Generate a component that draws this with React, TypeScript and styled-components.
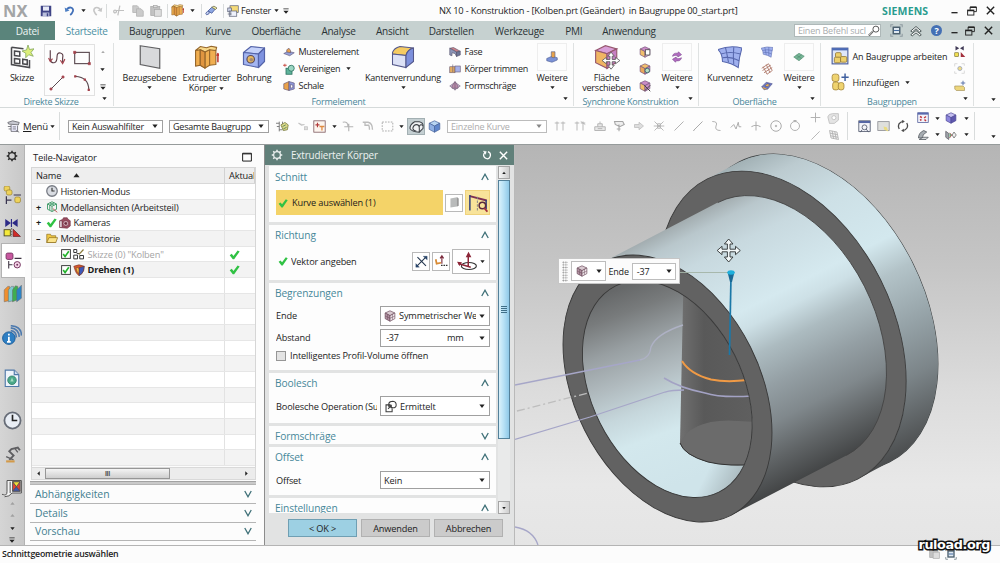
import React from "react";
import styled, { createGlobalStyle } from "styled-components";

const Global = createGlobalStyle`
  * { box-sizing: border-box; }
  body { margin: 0; background: #fff; overflow: hidden; }
`;

const Window = styled.div`
  width: 1000px;
  height: 563px;
  display: flex;
  flex-direction: column;
  background: #fcfcfc;
  color: #1c1c1c;
  font-family: "Open Sans", "Noto Sans", sans-serif;
  font-size: 9px;
  letter-spacing: -0.2px;
  white-space: nowrap;
  overflow: hidden;
`;

/* ---------- icons ---------- */

const cubeShape = (top: string, left: string, right: string, line: string) => (
  <g stroke={line} strokeWidth=".8" strokeLinejoin="round">
    <path d="M1 5 L6 1 L15 2 L11 6 Z" fill={top} />
    <path d="M1 5 L11 6 L11 15 L1 13 Z" fill={left} />
    <path d="M11 6 L15 2 L15 11 L11 15 Z" fill={right} />
  </g>
);
const hexCube = (a: string, b: string, c: string, line: string) => (
  <g stroke={line} strokeWidth=".9" strokeLinejoin="round">
    <path d="M8 1 L14.5 4 L8 7.5 L1.5 4 Z" fill={a} />
    <path d="M1.5 4 L8 7.5 V15 L1.5 11.5 Z" fill={b} />
    <path d="M14.5 4 L8 7.5 V15 L14.5 11.5 Z" fill={c} />
  </g>
);

const glyphs: Record<string, React.ReactNode> = {
  save: (
    <g>
      <path d="M1 1 H15 V15 H1 Z" fill="#3f4486" />
      <rect x="4" y="2" width="8" height="5.5" fill="#e6e9f6" />
      <rect x="3.5" y="10" width="9" height="5" fill="#b9bfdc" />
      <rect x="9" y="11" width="2" height="4" fill="#3f4486" />
    </g>
  ),
  undo: (
    <g>
      <path d="M4 6.500 Q7 2.500 11 4 Q15 6.500 12 11 Q11 13 9 14.500" fill="none" stroke="#4270b8" strokeWidth="2.600" />
      <path d="M1 3.500 L2 10 L8 8Z" fill="#4d7fc4" />
    </g>
  ),
  redo: (
    <g>
      <path d="M12 6.500 Q9 2.500 5 4 Q1 6.500 4 11 Q5 13 7 14.500" fill="none" stroke="#c6c6c6" strokeWidth="2.400" />
      <path d="M15 3.500 L14 10 L8 8Z" fill="#c6c6c6" />
    </g>
  ),
  cut: (
    <g stroke="#c0c0c0" fill="none" strokeWidth="1.8">
      <path d="M4 8 H16 M10 1 L7 15" />
      <circle cx="3" cy="9.500" r="2" />
    </g>
  ),
  copy: (
    <g fill="#cbcbcb" stroke="#b0b0b0">
      <path d="M1 1 H7 L9 3 V10 H1 Z" />
      <path d="M6 5 H12 L15 8 V15 H6 Z" />
    </g>
  ),
  paste: (
    <g fill="#c2c2c2" stroke="#aaa">
      <rect x="1" y="2" width="12" height="12" />
      <rect x="4.500" y=".5" width="5" height="3" fill="#ddd" />
      <rect x="6" y="6" width="9" height="9" fill="#ddd" />
    </g>
  ),
  extrude: (
    <g stroke="#94652b" strokeWidth=".7" strokeLinejoin="round">
      <path d="M1 3.500 L4 2.500 L7 4.500 L10 2.500 L14 3.500 V12.500 L10 13 L7 14.800 L4 13 L1 13.500 Z" fill="#f0ae50" />
      <path d="M1 3.500 L4 1 L8 1.800 L11 .8 L14.500 1.500 L14 3.500 L10 3 L7 4.500 L4 3 Z" fill="#f9d98a" />
      <path d="M4 3 V13 M7 4.500 V14.800 M10 3 V13" fill="none" />
      <path d="M4 3 L7 4.500 V14.800 L4 13Z" fill="#e09540" />
      <path d="M15.300 6 V11 M14.600 7 L15.300 5.500 L16 7" stroke="#c23b32" strokeWidth="1" />
    </g>
  ),
  eraser: (
    <g strokeWidth="1.100">
      <path d="M4 8 L9 3 L14 5 L9 11 Z" fill="#8da7e2" stroke="#485b9c" />
      <path d="M9 3 L12 1.500 L16 4 L14 6 Z" fill="#f0eda0" stroke="#77745b" />
      <path d="M1 11 Q3 7 6 9 Q6 13 2 13 Z" fill="#c7d1ee" stroke="#485b9c" />
    </g>
  ),
  windows: (
    <g stroke="#555a70" strokeWidth=".9">
      <rect x="4" y="1" width="11" height="9" fill="#f5da78" />
      <rect x="1" y="4" width="5" height="5" fill="#cfd5ea" />
      <rect x="3" y="8" width="10" height="7" fill="#eef1fb" />
      <path d="M1 12 H6 M5 8 V14" />
    </g>
  ),
  sketch: (
    <g fill="none" stroke="#4a4a4e" strokeWidth="1">
      <path d="M1 1.500 V13 L13 15 V10 M1 1.500 L9 2.500" />
      <path d="M3 4 L6.500 4.500 V7.500 L3 7 Z M3 9 L6.500 9.500 V12.500 L3 12 Z M8.500 9.500 L11.500 10 V13 L8.500 12.500 Z" />
      <path d="M12 0 L13 3 L16 2.500 L14 5 L15.500 7.500 L12.500 6.500 L10.500 8.500 L10.500 5.500 L8 4 L11 3.300Z" fill="#dcee7a" stroke="#7ea35a" strokeWidth=".5" />
    </g>
  ),
  spline: (
    <g fill="none" stroke="#5a3c46" strokeWidth="1">
      <path d="M2 1 V10 Q3 13 6 12 Q8 11 8 7 Q8 3 11 3.500 Q14 4 13 8 V12" />
      <path d="M.5 8 L2 11 L4 8.500 M15 9 L13 13 L11 10" stroke="#a3404a" />
    </g>
  ),
  rect: (
    <g fill="none" stroke="#5a4a50" strokeWidth="1">
      <rect x="1.500" y="3" width="13" height="10" />
      <path d="M.5 2 H2.500 V4 H.5Z M13.500 12 H15.500 V14 H13.500Z" fill="#a3404a" stroke="#a3404a" strokeWidth=".5" />
    </g>
  ),
  line: (
    <g fill="#a3404a" stroke="#5a4a50" strokeWidth="1">
      <path d="M2 14 L14 2" />
      <circle cx="2" cy="14" r="1.100" stroke="#a3404a" />
      <circle cx="14" cy="2" r="1.100" stroke="#a3404a" />
    </g>
  ),
  arc: (
    <g fill="none" stroke="#5a4a50" strokeWidth="1">
      <path d="M2 2 Q14 3 14 14" />
      <path d="M1.500 1.500 h1v1h-1z M10 4.500 h1v1h-1z M13.500 13.500h1v1h-1z" stroke="#a3404a" />
    </g>
  ),
  plane: <path d="M1.500 .5 L14.500 2.500 V15.500 L1.500 13 Z" fill="#d8d9db" stroke="#606062" strokeWidth=".8" />,
  hole: (
    <g>
      {cubeShape("#c5d2fa", "#a3b5f1", "#7f93e0", "#5463a8")}
      <circle cx="5.800" cy="9.500" r="2.500" fill="#e7b85d" stroke="#5a4c60" strokeWidth=".8" />
      <circle cx="6.200" cy="9.800" r="1.200" fill="#a58a70" />
    </g>
  ),
  round: (
    <g stroke="#54588a" strokeWidth=".7">
      <path d="M1 5 Q2 2 6 1 L15 2 Q11 3 10 7 L1 6 Z" fill="#f5cb62" />
      <path d="M1 6 L10 7 L10 15 L1 13 Z" fill="#dce1f6" />
      <path d="M10 7 Q11 3 15 2 V11 L10 15 Z" fill="#7d90dc" />
    </g>
  ),
  pattern: (
    <g stroke="#5d5376" strokeWidth=".8">
      <path d="M1 10 L7 7 L15 9 L9 13 Z" fill="#93a0d8" />
      <path d="M5 5 L8 3 L10 6 V9 L5 8Z" fill="#e9a24b" />
    </g>
  ),
  unite: (
    <g stroke="#2c7360" strokeWidth="1.100">
      <rect x="4" y="7" width="8" height="8" fill="#5eb39b" />
      <circle cx="11" cy="7" r="4" fill="#9bd5c2" />
      <path d="M0 3 H5 M2.500 1 V5" stroke="#c23b32" />
    </g>
  ),
  shell: (
    <g stroke="#5d5376" strokeWidth=".8">
      <path d="M1 5 L8 2 V14 L1 12Z" fill="#e9a24b" />
      <path d="M8 2 L15 4 V12 L8 14Z" fill="#8c95d6" />
      <path d="M10 6 L13 7 V10 L10 11Z" fill="#fff" />
    </g>
  ),
  chamfer: (
    <g stroke="#54506a" strokeWidth=".8">
      <path d="M1 3 L6 2 L15 7 L10 8Z" fill="#c98088" />
      <path d="M1 3 L10 8 V14 L8 10 L4 9 V13 L1 12Z" fill="#8c95b8" />
      <path d="M10 8 L15 7 V12 L10 14Z" fill="#6d7696" />
    </g>
  ),
  trim: (
    <g stroke="#6a5a70" strokeWidth=".8">
      <rect x="1" y="5" width="7" height="8" fill="#e4ae62" />
      <rect x="8" y="4" width="7" height="8" fill="#a5b0e8" />
      <path d="M5 2 V12" />
    </g>
  ),
  draft: (
    <g stroke="#6e5a76" strokeWidth=".8">
      <path d="M1 8 L8 3 L15 8 L8 13Z" fill="#d4c3dc" />
      <path d="M4 8 L8 2 L12 8 V11 H4Z" fill="#b88ba8" />
      <path d="M8 2 V14" />
    </g>
  ),
  boss: (
    <g stroke="#4b5c92" strokeWidth=".8">
      <path d="M1 10 L8 7 L15 9 V12 L8 15 L1 13Z" fill="#7b92d6" />
      <path d="M7 1 H12 V8 Q9.500 10 7 8Z" fill="#e8a34a" />
    </g>
  ),
  moveFace: (
    <g>
      <g stroke="#96586f" strokeWidth=".7">
        <path d="M1 4 L7 1 L14 3 L8 6 Z" fill="#d99fd8" />
        <path d="M1 4 L8 6 V15 L1 11.500Z" fill="#f0b563" />
        <path d="M8 6 L14 3 V11 L8 15Z" fill="#c77fc4" />
      </g>
      <path d="M10.500 5 L12.500 7.500 H11.200 V9.500 H13.200 V8.200 L15.900 10.200 L13.200 12.200 V10.900 H11.200 V13 H12.500 L10.500 15.500 L8.500 13 H9.800 V10.900 H7.600 V12.200 L5 10.200 L7.600 8.200 V9.500 H9.800 V7.500 H8.500Z" fill="#fff" stroke="#555" strokeWidth=".5" />
    </g>
  ),
  sync1: <g>{hexCube("#c98bc6", "#f1bf6c", "#e9c7e4", "#75527a")}<rect x="8.500" y="5" width="6" height="7" fill="#fff" stroke="#444" /></g>,
  sync2: <g>{hexCube("#f1bf6c", "#eaa75a", "#b985c0", "#75527a")}<circle cx="11" cy="10" r="3" fill="#b9dcc3" stroke="#3e6e6a" strokeWidth="1.200" /></g>,
  sync3: <g>{hexCube("#c98bc6", "#f1bf6c", "#c98bc6", "#75527a")}<path d="M7 7 L15 15 M15 7 L8 14" stroke="#444" strokeWidth="1.300" /></g>,
  swirl: (
    <g fill="#b26cc0" stroke="#7c4490" strokeWidth=".8">
      <path d="M2 7 Q3 2 9 3 L10 1 L14 5 L9 8 L9 6 Q5 5 2 7Z" />
      <path d="M14 9 Q13 14 7 13 L6 15 L2 11 L7 8 L7 10 Q11 11 14 9Z" />
    </g>
  ),
  mesh: (
    <g fill="#9fb0ee" stroke="#5767ad" strokeWidth=".7">
      <path d="M0 3 Q8 0 16 2 Q14 8 13.500 15 Q9 12 3 11 Q3 6 0 3Z" />
      <path d="M5 1.800 Q6 6 7 11.600 M10.500 1.500 Q10 7 10.500 13 M2 6 Q8 4 15 6 M3 8.500 Q8 7.500 14 10.500" fill="none" />
    </g>
  ),
  mesh2: (
    <g fill="none" stroke="#b07a6c" strokeWidth="1.200">
      <path d="M1 7 L10 1 M2 10 L13 3 M4 13 L15 6 M8 15 L15 10 M3 5 L8 15 M7 2 L12 13 M10 1 L15 10" />
    </g>
  ),
  mesh3: (
    <g stroke="#4a4e88" strokeWidth=".8">
      <path d="M1 9 L7 3 L15 5 L9 12Z" fill="#6e7cc8" />
      <path d="M5 8 L8 5 L12 6 L9 9Z" fill="#eab255" />
      <path d="M1 9 L4 13 L9 12" fill="#dda04a" />
    </g>
  ),
  sheet: (
    <g stroke="#4e8a6d" strokeWidth=".8" fill="#76b596">
      <path d="M1 8 L8 3 L15 7 L8 13Z" />
      <path d="M4.500 5.500 L11.500 10 M11.500 5 L4.500 10.500" fill="none" />
    </g>
  ),
  assembly: (
    <g>
      <rect x="1" y="1" width="14" height="14" fill="#dfe7f8" stroke="#4c5d9a" />
      <rect x="1" y="1" width="14" height="2" fill="#4c6ab6" />
      <g fill="#edd06b" stroke="#8f7430" strokeWidth=".7">
        <rect x="4" y="5" width="5" height="4.500" rx="1" />
        <rect x="3" y="9" width="5.500" height="5" rx="1" />
        <rect x="8.500" y="8.500" width="5.500" height="5" rx="1" />
      </g>
    </g>
  ),
  addPart: (
    <g>
      <g fill="#efd36f" stroke="#a18236" strokeWidth=".7">
        <rect x="1" y="1" width="6" height="6.500" rx="2" />
        <rect x="1.500" y="8" width="5.500" height="7" rx="2" />
        <rect x="6.500" y="8.500" width="5" height="6.500" rx="2" />
      </g>
      <path d="M12.500 .5 V7 M9.300 3.700 H15.700" stroke="#3f5f9f" strokeWidth="1.300" />
    </g>
  ),
  mirror: (
    <g>
      <path d="M2 0 V6 L7 3Z M13 0 V6 L8 3Z" fill="#403a56" />
      <rect x="1" y="9" width="5" height="5" fill="#f2e053" stroke="#6b6424" strokeWidth=".8" />
      <path d="M9 8 V14.500 H15Z" fill="#a3303c" />
    </g>
  ),
  brackets: (
    <g>
      <path d="M5 1 H1 V5 M11 15 H15 V11 M11 1 H15 V4 M1 12 V15 H4" fill="none" stroke="#ccc" />
      <circle cx="8.500" cy="8" r="3" fill="#efdb87" stroke="#8f9ab8" />
    </g>
  ),
  cluster: (
    <g>
      <path d="M1 8 H12 L14 10 V14 H3 L1 12Z" fill="#edd67c" stroke="#9c8950" strokeWidth=".8" />
      <path d="M12 1 V7 M9 4 H15" stroke="#506ba5" strokeWidth="1.200" />
    </g>
  ),
  menu: (
    <g stroke="#65656c" strokeWidth="1" fill="#c9cad2">
      <path d="M1 3 L7 1 L15 3 L14 6 L2 5Z" />
      <path d="M5 6 V14 H13 V7" fill="#eef" />
      <path d="M7 8.500 H11 M7 11 H11 M1 8 H5 M2 11 H5 M11 13 L15 15" />
    </g>
  ),
  asmPick: (
    <g strokeWidth="1">
      <path d="M4 2 V14 M4 4 H0 M4 8 H1 M4 12 H8 M8 2 V6" stroke="#666" fill="none" />
      <path d="M6 6 L11 3 L15 6 L14 12 L9 13Z" fill="#dcd888" stroke="#7c8045" />
      <path d="M8 8 L12 6 M9 11 L13 9" stroke="#4d7f58" />
    </g>
  ),
  faded: (
    <g stroke="#c2c2c2" fill="#ddd">
      <path d="M2 4 L6 7 L10 6" strokeWidth="1.500" />
      <rect x="10" y="9" width="4" height="4" />
    </g>
  ),
  snapBox: (
    <g fill="none">
      <rect x="1" y="1" width="14" height="14" stroke="#7f5b60" fill="#fdf5ef" />
      <path d="M3 6 H8 M5.500 3.500 V9" stroke="#b23b3b" strokeWidth="1.400" />
      <path d="M8 8 H14 M11 8 V13" stroke="#df8b42" strokeWidth="1.600" />
    </g>
  ),
  gPlus: <path d="M1 3 Q8 1 8 9 M3 9 H15 M9 5 V15" stroke="#b4b4b4" strokeWidth="1.500" fill="none" />,
  gHook: <path d="M1 3 H8 Q14 4 14 13 M4 3 V7 H9 Q10 9 10 13" stroke="#bcbcbc" strokeWidth="1.800" fill="none" />,
  dashed: <rect x="1.500" y="2.500" width="13" height="11" fill="none" stroke="#999" strokeDasharray="2 1.500" />,
  wireCube: (
    <g fill="#f0f2f4" stroke="#3d4248" strokeWidth="1.100">
      <path d="M1 10 Q1 6 6 3 H11 Q15 4 15 7 V10 L11 14 Q3 14 1 10Z" />
      <path d="M4 10 Q5 6 8 6 Q11 6 11 10 V14 M11 8 Q12 5 15 7 M4 10 Q5 13 8 13" fill="none" />
    </g>
  ),
  blueCube: hexCube("#b8d5f2", "#8fb0e4", "#5f86cc", "#49659c"),
  g1: <path d="M4 2 V14 M12 2 V14 M1 4 H7 M9 4 H15" stroke="#b7b7b7" strokeWidth="1.300" />,
  g2: <path d="M4 2 V14 M12 2 V14 M1 4 H7 M9 4 H15 M9 2 L15 6" stroke="#b7b7b7" strokeWidth="1.300" fill="none" />,
  g3: <path d="M1 9 H15 V14 H1Z M5 9 V5 H11 V9 M8 5 V2 M5 11.500 H11" stroke="#b0b0b0" strokeWidth="1.200" fill="#e8e8e8" />,
  g4: <path d="M8 15 V6 M2 2 H13 L15 6 L9 9 L3 6Z M5 12 H10" stroke="#a5a5a5" strokeWidth="1.400" fill="#eee" />,
  g5: <path d="M2 6 H8 V3 L14 8 L8 13 V10 H2Z" fill="#ddd" stroke="#bbb" />,
  g6: <path d="M2 2 L14 14 M14 2 L2 14 M1 8 H15 M6 5 H10 V11 H6Z" stroke="#b4b4b4" strokeWidth="1.200" fill="#eee" />,
  g7: <path d="M2 14 L14 2" stroke="#b0b0b0" strokeWidth="1.300" />,
  g8: <path d="M2 14 L14 2 M2 14 h1" stroke="#a8a8a8" strokeWidth="1.300" />,
  g9: <path d="M3 2 Q11 2 8 8 Q6 14 14 14" stroke="#b0b0b0" strokeWidth="1.300" fill="none" />,
  g10: <path d="M1 10 L5 6 L8 12 L11 3 L12 9 H15" stroke="#acacac" strokeWidth="1.300" fill="none" />,
  g11: <path d="M8 2 V14 M2 9 Q8 5 14 9" stroke="#b0b0b0" strokeWidth="1.400" fill="none" />,
  g12: <g stroke="#a9a9a9" fill="none" strokeWidth="1.300"><circle cx="8" cy="8" r="7" /><circle cx="8" cy="8" r="1" /></g>,
  g13: <g stroke="#b0b0b0" fill="none" strokeWidth="1.300"><circle cx="8" cy="8" r="6" /><path d="M6 1 H10" strokeWidth="2.500" /></g>,
  g14: <path d="M8 1 V15 M1 8 H15" stroke="#b0b0b0" strokeWidth="1.400" />,
  g15: <g stroke="#bdbdbd" fill="#e4e4e4"><path d="M1 6 Q2 2 7 2 H14 V10 L9 14 H3Z" /><circle cx="8.500" cy="7" r="2.500" fill="#fff" /></g>,
  g16: <path d="M2 2 L12 4 L14 14 L4 12Z M5.500 2.500 L7.500 13 M9 3.500 L11 13.500 M2.500 5.500 L12.500 7.500 M3.300 9 L13.300 11" stroke="#a9a9a9" fill="#f1f1f1" />,
  fitWin: (
    <g fill="none" stroke="#4c5468">
      <rect x="1" y="1" width="14" height="13" fill="#f4f5fa" />
      <path d="M1 2.500 H15" stroke="#5667a5" strokeWidth="2.500" />
      <circle cx="8" cy="9" r="3" />
      <path d="M10 11 L13 15 M3 15 L5 12" />
    </g>
  ),
  picture: (
    <g>
      <rect x="1" y="2" width="14" height="11" fill="#dfe0dd" stroke="#8c8e93" />
      <path d="M8 8 L12 9 L14 14 L9 12Z" fill="#eadc83" />
    </g>
  ),
  refresh: (
    <g fill="none" stroke="#4a4a4a" strokeWidth="1.700">
      <path d="M3 12 Q0 6 5 3 L8 2 M13 4 Q16 10 11 13 L8 14" />
      <path d="M7 0 L10 2 L7 4Z M9 12 L6 14 L9 16Z" fill="#4a4a4a" strokeWidth=".5" />
    </g>
  ),
  layout: (
    <g>
      <rect x="1" y="1" width="14" height="13" fill="#f3f3fa" stroke="#4d5998" />
      <rect x="1" y="1" width="14" height="2.500" fill="#5a69ae" />
      <path d="M4 6 L6.500 7.500 M4 11 L6 10 M12 6 L9.500 8 M12 12 L10 10" stroke="#c0393f" strokeWidth="2" />
    </g>
  ),
  purpleCube: hexCube("#c5bff0", "#8d86dd", "#5f58ae", "#4c4794"),
  hide: (
    <g stroke="#4c5258" strokeWidth="1" fill="#a7adb2">
      <path d="M2 12 Q2 5 9 2 L13 4 Q7 7 7 12Z" />
      <path d="M3 14 H12 L15 11 H8Z" fill="#d4d8da" />
    </g>
  ),
  section: (
    <g>
      <path d="M1 3 L5 6 V14 L1 11Z" fill="#a0a4aa" stroke="#5d5d66" />
      <path d="M6 5 L9 8 L6 12" fill="#58b47a" stroke="#b5404a" />
      <path d="M12 4 L15 8 L12 12 L9.500 8Z" fill="#eee" stroke="#666" />
    </g>
  ),
  gear: (
    <g stroke="currentColor" fill="none">
      <circle cx="8" cy="8" r="4.500" strokeWidth="1.700" />
      <path d="M8 1 V3 M8 13 V15 M1 8 H3 M13 8 H15 M3 3 L4.500 4.500 M11.500 11.500 L13 13 M13 3 L11.500 4.500 M4.500 11.500 L3 13" strokeWidth="2" />
    </g>
  ),
  asmTree: (
    <g>
      <g fill="#eed25a" stroke="#9b812b" strokeWidth=".6">
        <rect x="1" y="0" width="5" height="4.500" rx="1.500" />
        <rect x="3" y="3.500" width="5" height="4.500" rx="1.500" />
        <rect x="10.500" y="9.800" width="5" height="5" rx="1.500" />
      </g>
      <path d="M3 9 V16 M3 12.500 H7.500 M9.500 8 H16" stroke="#3a3550" strokeWidth="1.100" />
    </g>
  ),
  constraint: (
    <g>
      <path d="M2 0 V7 L7 3.500Z M13 0 V7 L8 3.500Z" fill="#2c2a86" />
      <path d="M7.500 0 V7" stroke="#2c2a86" />
      <rect x="1" y="9.500" width="5.500" height="5.500" fill="#f5ea3b" stroke="#4d4a22" strokeWidth=".8" />
      <path d="M9 9 V15.500 H15.500Z" fill="#d12c28" stroke="#5f1f28" strokeWidth=".6" />
      <path d="M7.700 8 V16" stroke="#444" strokeDasharray="1.500 1" strokeWidth=".7" />
    </g>
  ),
  partTree: (
    <g>
      <rect x="1" y="1" width="6.500" height="6" rx="1.500" fill="#c7589f" stroke="#70305c" strokeWidth=".8" />
      <path d="M3.500 8.500 V15.500 M3.500 12 H7 M9 6 H15.500" stroke="#3c3340" strokeWidth="1" />
      <circle cx="11.500" cy="12" r="3" fill="#f5d6e8" stroke="#70305c" strokeWidth=".9" />
      <circle cx="11.500" cy="12" r=".9" fill="#70305c" />
    </g>
  ),
  books: (
    <g strokeWidth=".4" stroke="#666">
      <path d="M1 5 L4 2 L5.500 2 L5 14 L1 15Z" fill="#ef8f2e" />
      <path d="M4.500 5 L7 2 L9 2 V14 L4.500 15Z" fill="#7cc9cf" />
      <path d="M8 5 L10.500 1.500 L12.500 2 V13 L8 15Z" fill="#3fae4f" />
      <path d="M11.500 5 L15.500 1 V12 L11.500 15Z" fill="#2b83c6" />
    </g>
  ),
  info: (
    <g fill="none" stroke="#4d7aae" strokeWidth="1.300">
      <path d="M7 4.500 Q11.500 5 11.500 10 M7 2.300 Q13.500 3 13.800 9.500 M7 .6 Q15.500 1 15.600 8.500" />
      <circle cx="5.500" cy="10.500" r="5" fill="#2e7fc3" stroke="#1d5f9c" strokeWidth=".8" />
      <path d="M5.500 7 V8.300 M5.500 9.300 V13.500 M4 13.500 H7" stroke="#fff" strokeWidth="1.400" />
    </g>
  ),
  doc: (
    <g>
      <path d="M2 1 H10 L14 5 V15.500 H2Z" fill="#eef4fb" stroke="#5079a8" />
      <path d="M10 1 V5 H14" fill="#cfdcec" stroke="#5079a8" />
      <circle cx="8" cy="10" r="3.800" fill="#4ba989" stroke="#2d7a66" strokeWidth=".7" />
      <path d="M8 7.500 L9.500 11 H6.500Z" fill="#a5dcc2" />
    </g>
  ),
  clock: (
    <g>
      <circle cx="8" cy="8" r="6.800" fill="#e9eef5" stroke="#666c77" strokeWidth="1.500" />
      <path d="M8 3.200 V8 H12" fill="none" stroke="#222" strokeWidth="1.400" />
    </g>
  ),
  smallClock: (
    <g>
      <circle cx="8" cy="8" r="7" fill="#d9dce2" stroke="#777b84" strokeWidth="1.700" />
      <path d="M8 3.500 V8 H11.500" fill="none" stroke="#333" strokeWidth="1.500" />
    </g>
  ),
  robot: (
    <g fill="none" stroke="#5f5f62" strokeWidth="1.800">
      <path d="M15 4 L13 1.500 L7 3 L5 5 L9 9 L5 13" />
      <path d="M10 2 L13 6 M2 10 L9 13" strokeWidth="1.200" />
      <path d="M2 14.500 H10" stroke="#d39a4a" strokeWidth="2" />
    </g>
  ),
  roll: (
    <g strokeWidth=".8" stroke="#555">
      <path d="M0 13 Q4 15 4 11 V2 H15.500 V12 H8 Q6 15 2 15" fill="#f4f4f4" />
      <rect x="8.500" y="3" width="6" height="7.500" fill="#e8402f" />
      <path d="M8.500 3 L11.500 7 L14.500 3Z" fill="#f2df36" />
      <path d="M8.500 10.500 L11.500 7 L14.500 10.500Z" fill="#3e55b8" />
      <path d="M6.500 3 V12" />
    </g>
  ),
  modelView: (
    <g fill="none" stroke="#3c9a67" strokeWidth="1.200">
      <path d="M8 1 L14 4 V11 L8 14 L2 11 V4Z M2 4 L8 7 L14 4 M8 7 V14 M5 2.500 L11 5.500 M11 2.500 L5 5.500 V12" />
      <path d="M9 10 L15 15" stroke="#c05050" />
    </g>
  ),
  camera: (
    <g stroke="#6a2b3c" strokeWidth=".8">
      <path d="M1 5 L5 3 L6 1 L11 1 L12 3 L15 5 V12 L11 15 L1 14Z" fill="#9b4d60" />
      <circle cx="9" cy="8.500" r="3.600" fill="#e9c6d0" />
      <circle cx="9" cy="8.500" r="1.600" fill="#6a2b3c" />
      <path d="M1 5 V14 L4 14 V5Z" fill="#efe6ea" />
    </g>
  ),
  folder: (
    <g stroke="#8a6b1c" strokeWidth=".9">
      <path d="M1 3 H6 L7 5 H13 V14 H1Z" fill="#f1c944" />
      <path d="M1 14 L4 7.500 H15.500 L13 14Z" fill="#fbe38a" />
    </g>
  ),
  checkbox: (
    <g fill="none">
      <rect x="1" y="1" width="14" height="14" fill="#fff" stroke="#333" strokeWidth="1.500" />
      <path d="M3.500 8 L6.500 12 L12.500 3.500" stroke="#24b32d" strokeWidth="2.600" />
    </g>
  ),
  sketchTree: (
    <g fill="none" stroke="#333" strokeWidth="1.300">
      <path d="M1 2 H5 V6 H1Z M1 9.500 H6 V14.500 H1Z M9 10 H14 V14.500 H9Z M5 7.500 H9" />
      <path d="M8 8.500 L14 2" stroke="#8a7a3a" strokeWidth="1.600" />
    </g>
  ),
  revolve: (
    <g strokeWidth=".7" stroke="#6b3422">
      <path d="M1 3 Q8 -1 15 3 L14 9 Q12 14 8 15.500 Q4 13 3 9Z" fill="#d5562f" />
      <path d="M8 5 L15 3 L14 9 Q12 14 8 15.500Z" fill="#3c58ba" />
      <path d="M4 5 Q6 4 8 6 V13 Q4 10 4 5Z" fill="#f3b845" />
    </g>
  ),
  check: <path d="M1 9 L4 7 L6.500 10 L12.500 2 L15.500 3.500 L7.500 15 H5.500 Z" fill="#30c244" />,
  bevel: (
    <g>
      <path d="M3 3 L11 1.500 L13 3 V12 L11 13 L3 14Z" fill="#b9bbbb" />
      <path d="M11 1.500 L13 3 V12 L11 13Z" fill="#999" />
    </g>
  ),
  curveRule: (
    <g fill="none" stroke="#5b2b3e" strokeWidth="1.200">
      <path d="M1.500 2.500 L15 6" stroke="#7c2f52" strokeWidth="1.500" />
      <path d="M1.500 1.500 V14 M14.500 5.500 V13" stroke="#31407e" />
      <path d="M7.500 3 V15" stroke="#888" strokeDasharray="2 1" strokeWidth=".8" />
      <circle cx="11.500" cy="10" r="2.600" />
      <path d="M13 12 L15.500 15" stroke="#a3303c" strokeWidth="1.500" />
    </g>
  ),
  reverse: (
    <g stroke="#23364e" strokeWidth="1.300" fill="#27466f">
      <path d="M3 2.500 L13.500 13.500 M2 14 L14 2" fill="none" />
      <path d="M10 1.500 H15 V6Z M1 15 V10.500 L5.500 15Z" strokeWidth=".3" />
    </g>
  ),
  vecDlg: (
    <g fill="none">
      <path d="M9 11 V3 M7 5 L9 2 L11 5" stroke="#7b2a3c" strokeWidth="1.300" />
      <path d="M2 6 L3 11 L8 10" stroke="#d88a34" strokeWidth="2" />
      <path d="M8 13 H16" stroke="#333" strokeWidth="1.500" strokeDasharray="1.800 1" />
    </g>
  ),
  vector: (
    <g fill="none" stroke="#333" strokeWidth=".9">
      <ellipse cx="9.500" cy="12" rx="6" ry="2.800" />
      <path d="M9 12 V4 M1 10 L11 13" stroke="#8c2638" strokeWidth="1.200" />
      <path d="M7 5 L9.200 .5 L11.500 5Z M0 8.500 L4 9 L2 12Z" fill="#8c2638" stroke="none" />
    </g>
  ),
  symCube: (
    <g>
      {hexCube("#d9c9d0", "#b393a3", "#efe6ea", "#6b4c5c")}
      <path d="M11.200 5.500 V13 M8 11 L14.500 8 M4.800 5.700 V13 M1.500 8 L8 11" stroke="#6b4c5c" strokeWidth=".7" />
    </g>
  ),
  boolean: (
    <g fill="none" stroke="#3d3d3d" strokeWidth="1.300">
      <path d="M8 6 H2.500 V14.500 H10 V10" />
      <path d="M6 9 V4 Q7 1.500 11 1.500 Q15 2 15 6 Q15 9.500 11 9.500 Q8 9.500 7 7.500" />
      <path d="M5 11 L9 7 M9 10 V6.500 H5.500" />
    </g>
  ),
  down: <path d="M1 4 H15 L8 13Z" fill="currentColor" />,
  barDown: <path d="M1 1 H15 V3.500 H1Z M1 7 H15 L8 15Z" fill="currentColor" />,
  up: <path d="M1 12 H15 L8 3Z" fill="currentColor" />,
  left: <path d="M12 1 V15 L4 8Z" fill="currentColor" />,
  right: <path d="M4 1 V15 L12 8Z" fill="currentColor" />,
  chevUp: <path d="M1.500 14 L8 2.500 L14.500 14" fill="none" stroke="#3f7078" strokeWidth="2.600" />,
  chevDown: <path d="M1.500 2 L8 13.500 L14.500 2" fill="none" stroke="#3f7078" strokeWidth="2.600" />,
  close: <path d="M1.500 1.500 L14.500 14.500 M14.500 1.500 L1.500 14.500" stroke="currentColor" strokeWidth="2.500" />,
  minimize: <path d="M1 13 H15" stroke="currentColor" strokeWidth="3" />,
  restore: (
    <g fill="none" stroke="currentColor" strokeWidth="1.500">
      <path d="M5 6 V1.500 H15 V9 H11" />
      <rect x="1" y="6.500" width="10" height="8" />
      <path d="M5 2.300 H15 M1 7.300 H11" strokeWidth="2" />
    </g>
  ),
  maximize: <path d="M1 2 H15 V14.500 H1Z M1 3 H15" fill="none" stroke="#222" strokeWidth="1.600" />,
  fullscreen: (
    <g fill="none" stroke="#4b5f6e" strokeWidth="1.300">
      <path d="M4 1 H1 V4 M12 1 H15 V4 M4 15 H1 V12 M12 15 H15 V12" stroke="#8e9aa0" />
      <rect x="4" y="4" width="8" height="8" fill="#dfe8f0" strokeWidth="1.800" />
      <path d="M5 8 H11" stroke="#4169a0" />
    </g>
  ),
  dblUp: (
    <g fill="#fff" stroke="#3c4a4a" strokeWidth="1.200" strokeLinejoin="round">
      <path d="M1 8 L8 2 L15 8 L13 9.500 L8 5 L3 9.500Z" />
      <path d="M1 13 L8 7.500 L15 13 L13 14.500 L8 10.500 L3 14.500Z" />
    </g>
  ),
  search: (
    <g fill="#fff" stroke="#555" strokeWidth="1.300">
      <circle cx="10.500" cy="5.500" r="4" />
      <path d="M7.500 8.500 L2 14.500 L1 13 L6.500 7.500" />
    </g>
  ),
  reset: (
    <g fill="none" stroke="#fff" strokeWidth="2">
      <path d="M9.500 2.500 Q14 4 13.500 8.500 Q12.500 14 8 14 Q3 13.500 2.500 8.500 Q2.500 6 5 4" />
      <path d="M2 1.500 L7 2.500 L5.500 7Z" fill="#fff" strokeWidth=".5" />
    </g>
  ),
};

const Glyph = styled.svg<{ $s: number; $c?: string }>`
  flex: none;
  display: block;
  width: ${(p) => p.$s}px;
  height: ${(p) => p.$s}px;
  color: ${(p) => p.$c ?? "#222"};
`;
const Icon = ({ n, s = 12, c }: { n: string; s?: number; c?: string }) => (
  <Glyph viewBox="0 0 16 16" $s={s} $c={c}>{glyphs[n]}</Glyph>
);

/* ---------- title bar ---------- */

const Cell = styled.div<{ $w: number; $left?: boolean; $size?: number; $ls?: number }>`
  flex: 0 0 ${(p) => p.$w}px;
  width: ${(p) => p.$w}px;
  display: flex;
  align-items: center;
  justify-content: ${(p) => (p.$left ? "flex-start" : "center")};
  font-size: ${(p) => p.$size ?? 9}px;
  letter-spacing: ${(p) => p.$ls ?? -0.2}px;
`;
const Spring = styled.div`
  flex: 1;
`;
const Rule = styled.i<{ $h: number }>`
  flex: 0 0 1px;
  height: ${(p) => p.$h}px;
  background: #d9dcdc;
`;
const TitleBar = styled.header`
  height: 21px;
  flex: none;
  display: flex;
  align-items: center;
`;
const Brand = styled.div`
  width: 32px;
  padding-left: 3px;
  font: bold 16.5px/20px "Noto Sans", sans-serif;
  color: #a3a5a6;
  letter-spacing: 0.2px;
`;
const Maker = styled.div`
  width: 60px;
  font: bold 10.5px/20px "Open Sans", sans-serif;
  color: #2a9c8f;
  letter-spacing: 0.15px;
`;

/* ---------- tabs ---------- */

const TabBar = styled.nav`
  height: 19px;
  flex: none;
  display: flex;
  align-items: stretch;
  background: #c6d1d0;
`;
const Tab = styled.div<{ $w: number; $kind?: "file" | "active" }>`
  flex: 0 0 ${(p) => p.$w}px;
  display: flex;
  align-items: center;
  justify-content: center;
  font-size: 10px;
  letter-spacing: -0.25px;
  color: ${(p) => (p.$kind === "file" ? "#eef5f3" : p.$kind === "active" ? "#4b8fa3" : "#2b3335")};
  background: ${(p) => (p.$kind === "file" ? "#5a847b" : p.$kind === "active" ? "#fdfdfd" : "transparent")};
`;
const SearchBox = styled.div`
  align-self: center;
  width: 87px;
  height: 13px;
  margin-right: 6px;
  padding-left: 3px;
  display: flex;
  align-items: center;
  justify-content: space-between;
  background: #fff;
  border: 1px solid #aeb8b8;
  color: #a9adae;
  font-size: 9px;
`;
const HelpMark = styled.div`
  width: 11px;
  height: 11px;
  border-radius: 50%;
  background: #4470b4;
  color: #fff;
  font: bold 9px/11px "Open Sans", sans-serif;
  text-align: center;
`;

/* ---------- ribbon ---------- */

const Ribbon = styled.section`
  height: 67px;
  flex: none;
  display: flex;
  background: #fdfdfd;
`;
const Group = styled.div<{ $w: number }>`
  flex: 0 0 ${(p) => p.$w}px;
  width: ${(p) => p.$w}px;
  min-width: 0;
  height: 63px;
  margin-top: 3px;
  display: flex;
  flex-direction: column;
  border-right: 1px solid #dfe2e2;
`;
const GroupBody = styled.div`
  height: 53px;
  display: flex;
`;
const GroupFoot = styled.div<{ $label: number; $corner: number }>`
  height: 10px;
  display: flex;
  align-items: center;
  color: #49879a;
  letter-spacing: -0.22px;
  & > span {
    flex: 0 0 ${(p) => p.$label * 2}px;
    text-align: center;
  }
  & > svg {
    margin-left: ${(p) => p.$corner - 2 * p.$label}px;
    margin-top: -5px;
  }
`;
const BigButton = styled.div<{ $w: number; $frame?: boolean }>`
  flex: 0 0 ${(p) => p.$w}px;
  width: ${(p) => p.$w}px;
  min-width: 0;
  display: flex;
  flex-direction: column;
  align-items: center;
  line-height: 10px;
  text-align: center;
  & > div {
    width: ${(p) => (p.$frame ? 30 : 26)}px;
    height: 28px;
    margin-bottom: 2px;
    display: flex;
    align-items: center;
    justify-content: center;
    border: 1px solid ${(p) => (p.$frame ? "#eeeeee" : "transparent")};
  }
  & > svg {
    margin-top: 2px;
  }
`;
const Inline = styled.span`
  display: inline-flex;
  align-items: center;
  gap: 3px;
`;
const Big = ({ w, icon, s = 24, label, second, menu, frame }: {
  w: number; icon: string; s?: number; label: string; second?: React.ReactNode; menu?: boolean; frame?: boolean;
}) => (
  <BigButton $w={w} $frame={frame}>
    <div><Icon n={icon} s={s} /></div>
    <span>{label}</span>
    {menu && <Icon n="down" s={5} />}
    {second && <Inline>{second}</Inline>}
  </BigButton>
);
const SmallList = styled.div<{ $w: number; $row?: number }>`
  flex: 0 0 ${(p) => p.$w}px;
  width: ${(p) => p.$w}px;
  min-width: 0;
  letter-spacing: ${(p) => (p.$row ? -0.13 : -0.3)}px;
  display: grid;
  grid-auto-rows: ${(p) => p.$row ?? 17.2}px;
  align-content: start;
  & > div {
    display: flex;
    align-items: center;
    gap: 3.5px;
  }
`;
const Gallery = styled.div`
  width: 51px;
  height: 52px;
  margin-top: 1px;
  display: grid;
  grid-template-columns: 1fr 1fr;
  place-items: center;
  border: 1px solid #e1e1e1;
`;
const GalleryNav = styled.div`
  width: 15px;
  display: flex;
  flex-direction: column;
  align-items: center;
  justify-content: space-between;
  padding: 7px 0 6px;
`;

/* ---------- selection bar ---------- */

const SelectionBar = styled.section`
  height: 38px;
  flex: none;
  display: flex;
  align-items: center;
  border-top: 1px solid #d5dada;
  border-bottom: 1px solid #969b9b;
  background: #fdfdfd;
`;
const Combo = styled.div<{ $w: number; $h?: number; $off?: boolean }>`
  flex: 0 0 ${(p) => p.$w}px;
  height: ${(p) => p.$h ?? 13}px;
  padding: 0 4px 0 3px;
  display: flex;
  align-items: center;
  gap: 3px;
  background: #fff;
  border: 1px solid ${(p) => (p.$off ? "#bcbcbc" : "#a0a0a0")};
  color: ${(p) => (p.$off ? "#adadad" : "#1c1c1c")};
  overflow: hidden;
  & > span {
    flex: 1;
    overflow: hidden;
  }
`;
const Pressed = styled.div`
  flex: 0 0 18px;
  height: 17px;
  display: flex;
  align-items: center;
  justify-content: center;
  background: #c4cfd2;
  border: 1px solid #a3b0b3;
`;
const Stack = styled.div<{ $w: number }>`
  flex: 0 0 ${(p) => p.$w}px;
  height: 29px;
  display: flex;
  flex-direction: column;
  align-items: center;
  justify-content: space-between;
`;
const StackCarets = styled(Stack)`
  padding: 4px 0;
`;
const EndCaret = styled.div`
  align-self: flex-end;
  padding: 0 4px 5px 0;
`;

/* ---------- work area ---------- */

const Work = styled.main`
  height: 401px;
  flex: none;
  display: flex;
  border-bottom: 1px solid #b4b4b4;
`;
const Rail = styled.aside`
  flex: 0 0 25px;
  display: flex;
  flex-direction: column;
  background: linear-gradient(90deg, #d5d5d5, #c8c8c8);
  border-right: 1px solid #b3b3b3;
`;
const RailItem = styled.div<{ $h: number; $active?: boolean }>`
  flex: 0 0 ${(p) => p.$h}px;
  display: flex;
  align-items: center;
  justify-content: center;
  ${(p) => p.$active && "background:#fff; margin: 0 -1px 0 1px; border: 1px solid #b3b3b3; border-right: 0;"}
`;
const Navigator = styled.section`
  flex: 0 0 240px;
  padding: 0 8px 0 5px;
  background: #fcfcfc;
  border-right: 1px solid #8c8c8c;
`;
const NavTitle = styled.div`
  height: 22px;
  padding: 2px 4px 0 3px;
  display: flex;
  align-items: center;
  justify-content: space-between;
  font-size: 9.5px;
`;
const Table = styled.div`
  margin-left: 1px;
  height: 300px;
  border: 1px solid #d6d6d6;
  border-bottom: 0;
  overflow: hidden;
  font-size: 9.25px;
  letter-spacing: -0.16px;
`;
const TreeHead = styled.div`
  display: grid;
  grid-template-columns: 193px 1fr;
  height: 16px;
  background: #eeeeee;
  border-bottom: 1px solid #d8d8d8;
  line-height: 16px;
  & > span {
    padding-left: 4px;
    display: flex;
    align-items: center;
    gap: 12px;
    border-right: 1px solid #d2d2d2;
    overflow: hidden;
  }
`;
const TreeRow = styled.div<{ $alt: boolean; $tone?: "bold" | "grey" }>`
  display: grid;
  grid-template-columns: 193px 1fr;
  height: 15.68px;
  border-bottom: 1px solid #e6e6e6;
  background: ${(p) => (p.$alt ? "#f3f3f3" : "#fff")};
  color: ${(p) => (p.$tone === "grey" ? "#a4a4a4" : "#1c1c1c")};
  font-weight: ${(p) => (p.$tone === "bold" ? 700 : 400)};
  & > span {
    display: flex;
    align-items: center;
    gap: 2.2px;
    border-right: 1px solid #e2e2e2;
  }
`;
const Twig = styled.b<{ $w: number }>`
  flex: 0 0 ${(p) => p.$w}px;
  font-weight: 700;
  font-size: 9px;
  text-align: left;
  padding-left: 4px;
`;
const HScroll = styled.div`
  height: 13px;
  margin-left: 1px;
  display: flex;
  align-items: center;
  padding: 0 6px 0 4px;
  background: #ececec;
  border: 1px solid #d9d9d9;
`;
const Thumb = styled.div`
  width: 125px;
  height: 11px;
  margin-left: 4px;
  display: flex;
  align-items: center;
  justify-content: center;
  background: linear-gradient(#f4f4f4, #cfcfcf);
  border: 1px solid #969696;
  font: bold 7px/9px "Liberation Sans", sans-serif;
  color: #555;
`;
const Splitter = styled.div`
  height: 4px;
  margin-top: 1px;
  background: #c9c9c9;
  border-top: 1px solid #a2a2a2;
  border-bottom: 1px solid #b5b5b5;
`;
const Fold = styled.div`
  height: 18.8px;
  padding: 0 4px 0 5px;
  display: flex;
  align-items: center;
  justify-content: space-between;
  color: #437f90;
  font-size: 10.4px;
  letter-spacing: -0.05px;
  border-bottom: 1px solid #b5b5b5;
`;

/* ---------- dialog ---------- */

const Dialog = styled.section`
  flex: 0 0 250px;
  width: 250px;
  min-width: 0;
  display: flex;
  flex-direction: column;
  background: #e2e3e3;
  border-right: 1px solid #b9b9b9;
  font-size: 9.2px;
  letter-spacing: -0.15px;
`;
const DialogHead = styled.div`
  height: 20px;
  flex: none;
  padding: 0 6px 0 6px;
  display: flex;
  align-items: center;
  gap: 7px;
  background: #61807a;
  color: #eef3f2;
  font-size: 9.9px;
  & > span {
    flex: 1;
    padding-left: 1px;
  }
`;
const DialogBody = styled.div`
  height: 349px;
  flex: none;
  padding: 1px 4px 0 4px;
  display: flex;
  gap: 2px;
`;
const Sections = styled.div`
  flex: 0 0 227px;
  display: flex;
  flex-direction: column;
  gap: 3px;
  overflow: hidden;
`;
const Section = styled.div<{ $h: number }>`
  flex: 0 0 ${(p) => p.$h}px;
  background: #fdfdfd;
  padding: 0 6px;
  overflow: hidden;
`;
const SectionHead = styled.div<{ $h?: number }>`
  height: ${(p) => p.$h ?? 20}px;
  padding-right: 1px;
  display: flex;
  align-items: center;
  justify-content: space-between;
  color: #47889a;
  font-size: 10.2px;
  letter-spacing: -0.1px;
`;
const Field = styled.div<{ $h: number; $gap?: number }>`
  height: ${(p) => p.$h}px;
  padding-left: 1px;
  display: flex;
  align-items: center;
  gap: ${(p) => p.$gap ?? 3}px;
  & > label {
    flex: 1;
    min-width: 0;
    overflow: hidden;
  }
`;
const Pick = styled.div`
  flex: 0 0 167px;
  height: 25px;
  padding-left: 2px;
  display: flex;
  align-items: center;
  gap: 4px;
  background: #f4d368;
`;
const ToolBtn = styled.div<{ $w: number; $h: number; $on?: boolean }>`
  width: ${(p) => p.$w}px;
  height: ${(p) => p.$h}px;
  flex: none;
  display: flex;
  align-items: center;
  justify-content: space-evenly;
  background: ${(p) => (p.$on ? "#f8e39a" : "#fff")};
  border: 1px solid ${(p) => (p.$on ? "#efd27c" : "#b9b9b9")};
`;
const CheckSquare = styled.i`
  width: 10px;
  height: 10px;
  margin-right: 1px;
  background: #e3e3e3;
  border: 1px solid #969696;
`;
const VScroll = styled.div`
  flex: 0 0 12px;
  display: flex;
  flex-direction: column;
  background: #e9eaea;
`;
const ScrollEnd = styled.div`
  height: 13px;
  display: flex;
  align-items: center;
  justify-content: center;
  background: linear-gradient(90deg, #f6f6f6, #cdcdcd);
  border: 1px solid #a5a5a5;
`;
const VThumb = styled.div`
  height: 259px;
  margin: 1px 0 auto;
  display: flex;
  flex-direction: column;
  align-items: center;
  justify-content: center;
  gap: 1px;
  background: linear-gradient(90deg, #d9f1fb, #b9e2f6 45%, #8fc9e8);
  border: 1px solid #54819a;
  & > i {
    width: 6px;
    height: 1px;
    background: #3f6f88;
  }
`;
const Buttons = styled.div`
  height: 31px;
  padding: 5px 11px 8px 23px;
  display: flex;
  gap: 4px;
`;
const Button = styled.div<{ $primary?: boolean }>`
  flex: 0 0 69px;
  height: 18px;
  display: flex;
  align-items: center;
  justify-content: center;
  background: ${(p) => (p.$primary ? "#9dd0e3" : "#cbcbcb")};
  border: 1px solid ${(p) => (p.$primary ? "#6f9fb3" : "#b1b1b1")};
`;

/* ---------- graphics area ---------- */

const Viewport = styled.section`
  flex: 0 0 485px;
  position: relative;
  overflow: hidden;
  & > svg {
    display: block;
  }
`;
const FloatBar = styled.div`
  position: absolute;
  left: 42.5px;
  top: 113px;
  width: 122px;
  height: 26px;
  padding: 0 5px 0 3px;
  display: flex;
  align-items: center;
  gap: 3px;
  background: #fbfbfb;
  border: 1px solid #c6c6c6;
  & > span {
    flex: 0 0 20px;
  }
`;
const Grip = styled.i`
  flex: 0 0 6px;
  height: 21px;
  background: radial-gradient(circle, #8d8d8d 0.7px, transparent 1px) 0 0 / 2.6px 2.6px;
`;
const FloatPick = styled.div<{ $w: number; $h: number }>`
  flex: 0 0 ${(p) => p.$w}px;
  height: ${(p) => p.$h}px;
  padding: 0 3px 0 4px;
  display: flex;
  align-items: center;
  justify-content: space-between;
  background: #fff;
  border: 1px solid #bdbdbd;
`;

const ringTurn = (x: number, y: number) => `rotate(63.4 ${x} ${y})`;

const Model = () => (
  <svg width="485" height="400" viewBox="515 145 485 400">
    <defs>
      <linearGradient id="sky" x1="0" y1="0" x2="0" y2="1">
        <stop offset="0" stopColor="#b5b5b5" />
        <stop offset=".3" stopColor="#c5c5c5" />
        <stop offset=".62" stopColor="#dcdcdc" />
        <stop offset=".85" stopColor="#e8e8e8" />
        <stop offset="1" stopColor="#e5e5e5" />
      </linearGradient>
      <linearGradient id="steel" gradientUnits="userSpaceOnUse" x1="717.7" y1="202.6" x2="846.3" y2="455.4">
        <stop offset="0" stopColor="#a2acaf" />
        <stop offset=".06" stopColor="#b9c7cc" />
        <stop offset=".16" stopColor="#c8d9df" />
        <stop offset=".38" stopColor="#d5e9ef" />
        <stop offset=".44" stopColor="#cde0e6" />
        <stop offset=".54" stopColor="#acbbc0" />
        <stop offset=".66" stopColor="#949fa4" />
        <stop offset=".78" stopColor="#80888c" />
        <stop offset=".9" stopColor="#5f6365" />
        <stop offset="1" stopColor="#444647" />
      </linearGradient>
      <linearGradient id="rim" gradientUnits="userSpaceOnUse" x1="738.2" y1="162.4" x2="890.4" y2="461.6">
        <stop offset="0" stopColor="#a2b1b5" />
        <stop offset=".08" stopColor="#bccbd0" />
        <stop offset=".22" stopColor="#cde0e6" />
        <stop offset=".4" stopColor="#d3e8ee" />
        <stop offset=".5" stopColor="#b3c3c8" />
        <stop offset=".66" stopColor="#95a2a7" />
        <stop offset=".8" stopColor="#7c8589" />
        <stop offset="1" stopColor="#4b4d4e" />
      </linearGradient>
      <linearGradient id="bore" gradientUnits="userSpaceOnUse" x1="618" y1="289" x2="690" y2="480">
        <stop offset="0" stopColor="#666869" />
        <stop offset=".12" stopColor="#787b7c" />
        <stop offset=".28" stopColor="#989fa2" />
        <stop offset=".44" stopColor="#b0babe" />
        <stop offset=".6" stopColor="#c6d7dc" />
        <stop offset=".74" stopColor="#d3e8ed" />
        <stop offset="1" stopColor="#cfe4ea" />
      </linearGradient>
      <linearGradient id="boreShade" gradientUnits="userSpaceOnUse" x1="712" y1="462" x2="752" y2="482">
        <stop offset="0" stopColor="#8f9a9e" stopOpacity="0" />
        <stop offset="1" stopColor="#8f9a9e" stopOpacity=".8" />
      </linearGradient>
      <linearGradient id="pin" x1="0" y1="0" x2="1" y2="0">
        <stop offset="0" stopColor="#707070" />
        <stop offset=".3" stopColor="#595959" />
        <stop offset="1" stopColor="#606060" />
      </linearGradient>
      <clipPath id="boreClip">
        <ellipse cx="667.3" cy="389" rx="115.300" ry="75.400" transform={ringTurn(667.3, 389)} />
      </clipPath>
    </defs>
    <rect x="515" y="145" width="485" height="400" fill="url(#sky)" />

    <ellipse cx="814.300" cy="312" rx="167.800" ry="109.800" transform={ringTurn(814.3, 312)} fill="#a8b4b8" stroke="#3f4344" />
    <path d="M738.200 162.400 A167.800 109.800 63.400 0 1 890.400 461.600 L858.600 478.600 A167.800 109.800 63.400 0 0 706.400 179.400 Z" fill="url(#rim)" />
    <ellipse cx="782.500" cy="329" rx="167.800" ry="109.800" transform={ringTurn(782.5, 329)} fill="#636363" stroke="#3a3a3a" strokeWidth=".9" />
    <path d="M603.200 262.100 L717.700 202.600 A141.800 92.800 63.400 0 1 846.300 455.400 L731.800 514.900 Z" fill="url(#steel)" />
    <path d="M717.700 202.600 A141.800 92.800 63.400 0 1 846.300 455.400" fill="none" stroke="#444" strokeWidth=".9" />

    <ellipse cx="667.500" cy="388.500" rx="141.800" ry="92.800" transform={ringTurn(667.5, 388.5)} fill="#626262" stroke="#383838" strokeWidth=".9" />
    <g clipPath="url(#boreClip)">
      <rect x="575" y="275" width="185" height="228" fill="url(#bore)" />
      <rect x="575" y="275" width="185" height="228" fill="url(#boreShade)" />
      <path d="M683.500 280 L680 443 Q684 455 708 462 Q728 467 760 464 V270 Z" fill="url(#pin)" />
      <path d="M680 443 Q690 421 728 420.500 L760 422 V464 Q728 467 708 462 Q684 455 680 443Z" fill="#6b6b6b" />
      <path d="M680 443 Q684 455 708 462 Q728 467 760 464" fill="none" stroke="#333" />
      <path d="M640 360 Q650 358 651 347 Q656 334 683 325" fill="none" stroke="#aeb1c4" strokeWidth="1.400" />
      <path d="M682 361 Q690 374 711 379.500 Q726 382.500 748 380" fill="none" stroke="#f09a45" strokeWidth="2" />
      <path d="M664 378 Q680 388 705 393 Q720 398 752 396" fill="none" stroke="#a3a2c4" strokeWidth="1.500" />
    </g>
    <ellipse cx="667.300" cy="389" rx="115.300" ry="75.400" transform={ringTurn(667.3, 389)} fill="none" stroke="#383838" strokeWidth=".9" />

    <g fill="none" stroke="#a6a6c8" strokeWidth="1.300">
      <path d="M515 385 L640 360" />
      <path d="M515 439.500 L590 417 L665 392 Q672 390 684 390" />
      <path d="M515 527 Q533 530 538 545" />
      <path d="M517 411 L588 393" stroke="#bdbdbd" strokeDasharray="8 3 2 3" />
    </g>
    <path d="M680 272.500 H731" stroke="#a3b3a6" strokeWidth=".9" />
    <path d="M731 276 L729.500 355" stroke="#1b78a8" strokeWidth="1.700" />
    <path d="M727.500 272 L734.500 272 L732 282 H730Z" fill="#1a6a96" />
    <ellipse cx="731" cy="272.500" rx="3.600" ry="2.200" fill="#1eb0dc" />
    <path d="M728.700 239 L733 244 H730 V249.200 H735.500 V246.300 L740.300 250.500 L735.500 254.700 V251.800 H730 V257 H733 L728.700 262 L724.400 257 H727.400 V251.800 H722 V254.700 L717.200 250.500 L722 246.300 V249.200 H727.400 V244 H724.400Z" fill="#f2f7f8" stroke="#2d3132" strokeWidth=".9" />
  </svg>
);

/* ---------- status bar ---------- */

const Status = styled.footer`
  flex: 1;
  position: relative;
  padding: 0 43px 2px 2px;
  display: flex;
  align-items: center;
  justify-content: space-between;
  font-weight: 600;
  font-size: 8.8px;
  letter-spacing: -0.2px;
  & > div {
    display: flex;
    gap: 5px;
  }
`;
const Watermark = styled.span`
  position: absolute;
  right: 10px;
  top: -11px;
  font: bold 12.8px/20px "DejaVu Sans", sans-serif;
  letter-spacing: -0.4px;
  color: #fff;
  paint-order: stroke fill;
  -webkit-text-stroke: 3px #111;
`;

const tree: { t: string; icons: string[]; indent: number; twig?: string; tone?: "bold" | "grey"; ok?: boolean }[] = [
  { t: "Historien-Modus", icons: ["smallClock"], indent: 14 },
  { t: "Modellansichten (Arbeitsteil)", icons: ["modelView"], indent: 14, twig: "+" },
  { t: "Kameras", icons: ["check", "camera"], indent: 14, twig: "+" },
  { t: "Modellhistorie", icons: ["folder"], indent: 14, twig: "–" },
  { t: 'Skizze (0) "Kolben"', icons: ["checkbox", "sketchTree"], indent: 29, tone: "grey", ok: true },
  { t: "Drehen (1)", icons: ["checkbox", "revolve"], indent: 29, tone: "bold", ok: true },
];

const tabs: [string, number][] = [
  ["Baugruppen", 76.5], ["Kurve", 46], ["Oberfläche", 70], ["Analyse", 55], ["Ansicht", 52.5],
  ["Darstellen", 65.5], ["Werkzeuge", 71], ["PMI", 37.5], ["Anwendung", 73],
];

const snaps: [string, number][] = [
  ["g1", 20], ["g2", 20], ["g3", 19], ["g4", 20], ["g5", 19], ["g6", 21], ["g7", 19], ["g8", 19],
  ["g9", 18], ["g10", 21], ["g11", 19], ["g12", 21], ["g13", 17],
];

const rail: { n?: string; h: number; s?: number; active?: boolean; c?: string }[] = [
  { n: "gear", h: 21, s: 12 }, { h: 16 },
  { n: "asmTree", h: 26, s: 18 }, { h: 4 },
  { n: "constraint", h: 31, s: 18 },
  { n: "partTree", h: 35, s: 17, active: true },
  { n: "books", h: 30, s: 19 },
  { n: "info", h: 54, s: 20 },
  { n: "doc", h: 32, s: 18 },
  { n: "clock", h: 52, s: 19 },
  { n: "robot", h: 14, s: 17 }, { h: 14 },
  { n: "roll", h: 22, s: 20 },
  { n: "up", h: 8, s: 5, c: "#a0a0a0" },
  { n: "up", h: 16, s: 5, c: "#a0a0a0" },
  { n: "down", h: 10, s: 5 },
  { n: "barDown", h: 14, s: 6 },
];

export default function App() {
  return (
    <Window>
      <Global />
      <TitleBar>
        <Brand>NX</Brand>
        <Cell $w={28}><Icon n="save" s={12} /></Cell>
        <Cell $w={18}><Icon n="undo" s={11} /></Cell>
        <Cell $w={10}><Icon n="down" s={5} /></Cell>
        <Cell $w={18}><Icon n="redo" s={11} /></Cell>
        <Rule $h={14} />
        <Cell $w={22}><Icon n="cut" s={11} /></Cell>
        <Cell $w={17}><Icon n="copy" s={12} /></Cell>
        <Cell $w={19}><Icon n="paste" s={12} /></Cell>
        <Cell $w={4}><Rule $h={14} /></Cell>
        <Cell $w={17}><Icon n="extrude" s={13} /></Cell>
        <Cell $w={12}><Icon n="down" s={5} /></Cell>
        <Cell $w={6}><Rule $h={14} /></Cell>
        <Cell $w={14}><Icon n="eraser" s={12} /></Cell>
        <Cell $w={5} />
        <Rule $h={14} />
        <Cell $w={17}><Icon n="windows" s={12} /></Cell>
        <Cell $w={32} $left>Fenster</Cell>
        <Cell $w={7}><Icon n="down" s={5} /></Cell>
        <Cell $w={11}><Icon n="barDown" s={6} /></Cell>
        <Cell $w={148} />
        <Cell $w={443} $left $size={9.3}>NX 10 - Konstruktion - [Kolben.prt (Geändert)&nbsp; in Baugruppe 00_start.prt]</Cell>
        <Maker>SIEMENS</Maker>
        <Spring />
        <Cell $w={18}><Icon n="minimize" s={7} /></Cell>
        <Cell $w={18}><Icon n="restore" s={10} /></Cell>
        <Cell $w={18}><Icon n="close" s={9} /></Cell>
        <Cell $w={1} />
      </TitleBar>

      <TabBar>
        <Tab $w={55} $kind="file">Datei</Tab>
        <Tab $w={63.5} $kind="active">Startseite</Tab>
        {tabs.map(([t, w]) => <Tab key={t} $w={w}>{t}</Tab>)}
        <Spring />
        <SearchBox>Einen Befehl sucl<Icon n="search" s={12} /></SearchBox>
        <Cell $w={19}><Icon n="fullscreen" s={13} /></Cell>
        <Cell $w={20}><Icon n="dblUp" s={12} /></Cell>
        <Cell $w={21}><HelpMark>?</HelpMark></Cell>
        <Cell $w={14}><Icon n="minimize" s={7} /></Cell>
        <Cell $w={18}><Icon n="restore" s={10} /></Cell>
        <Cell $w={19}><Icon n="close" s={9} /></Cell>
        <Cell $w={2} />
      </TabBar>

      <Ribbon>
        <Group $w={114}>
          <GroupBody>
            <Big w={44} icon="sketch" label="Skizze" />
            <Gallery>
              <Icon n="spline" s={18} /><Icon n="rect" s={18} />
              <Icon n="line" s={16} /><Icon n="arc" s={18} />
            </Gallery>
            <GalleryNav>
              <Icon n="up" s={4} c="#aaa" /><Icon n="down" s={5} /><Icon n="barDown" s={6} />
            </GalleryNav>
          </GroupBody>
          <GroupFoot $label={51} $corner={102}><span>Direkte Skizze</span><Icon n="down" s={5} /></GroupFoot>
        </Group>

        <Group $w={460}>
          <GroupBody>
            <Big w={71} icon="plane" label="Bezugsebene" menu />
            <Big w={43} icon="extrude" s={25} label="Extrudierter" second={<>Körper <Icon n="down" s={5} /></>} />
            <Big w={52} icon="hole" label="Bohrung" />
            <Cell $w={3} />
            <SmallList $w={76}>
              <div><Icon n="pattern" s={12} />Musterelement</div>
              <div><Icon n="unite" s={12} />Vereinigen&nbsp; <Icon n="down" s={5} /></div>
              <div><Icon n="shell" s={12} />Schale</div>
            </SmallList>
            <Big w={88} icon="round" label="Kantenverrundung" menu />
            <Cell $w={2} />
            <SmallList $w={84}>
              <div><Icon n="chamfer" s={12} />Fase</div>
              <div><Icon n="trim" s={12} />Körper trimmen</div>
              <div><Icon n="draft" s={12} />Formschräge</div>
            </SmallList>
            <Big w={38} icon="boss" s={12} label="Weitere" menu frame />
          </GroupBody>
          <GroupFoot $label={224.5} $corner={449}><span>Formelement</span><Icon n="down" s={5} /></GroupFoot>
        </Group>

        <Group $w={125}>
          <GroupBody>
            <Big w={65} icon="moveFace" s={26} label="Fläche" second="verschieben" />
            <SmallList $w={19}>
              <div><Icon n="sync1" /></div>
              <div><Icon n="sync2" /></div>
              <div><Icon n="sync3" /></div>
            </SmallList>
            <Big w={38} icon="swirl" s={12} label="Weitere" menu frame />
          </GroupBody>
          <GroupFoot $label={56.5} $corner={114}><span>Synchrone Konstruktion</span><Icon n="down" s={5} /></GroupFoot>
        </Group>

        <Group $w={122}>
          <GroupBody>
            <Big w={62} icon="mesh" label="Kurvennetz" />
            <SmallList $w={19}>
              <div><Icon n="mesh" /></div>
              <div><Icon n="mesh2" /></div>
              <div><Icon n="mesh3" /></div>
            </SmallList>
            <Big w={38} icon="sheet" s={12} label="Weitere" menu frame />
          </GroupBody>
          <GroupFoot $label={55.5} $corner={111}><span>Oberfläche</span><Icon n="down" s={5} /></GroupFoot>
        </Group>

        <Group $w={153}>
          <GroupBody>
            <Cell $w={10} />
            <SmallList $w={123} $row={26}>
              <div><Icon n="assembly" s={18} />An Baugruppe arbeiten</div>
              <div><Icon n="addPart" s={18} />Hinzufügen&nbsp; <Icon n="down" s={5} /></div>
            </SmallList>
            <SmallList $w={18}>
              <div><Icon n="mirror" /></div>
              <div><Icon n="brackets" s={11} /></div>
              <div><Icon n="cluster" /></div>
            </SmallList>
          </GroupBody>
          <GroupFoot $label={71} $corner={142}><span>Baugruppen</span><Icon n="down" s={5} /></GroupFoot>
        </Group>
        <Spring />
        <EndCaret><Icon n="down" s={5} /></EndCaret>
      </Ribbon>

      <SelectionBar>
        <Cell $w={7} />
        <Cell $w={16} $left><Icon n="menu" s={13} /></Cell>
        <Cell $w={26} $left $size={9.6}><u>M</u>enü</Cell>
        <Cell $w={6}><Icon n="down" s={5} /></Cell>
        <Cell $w={9}><Rule $h={28} /></Cell>
        <Cell $w={4} />
        <Combo $w={95}><span>Kein Auswahlfilter</span><Icon n="down" s={6} /></Combo>
        <Cell $w={6} />
        <Combo $w={100}><span>Gesamte Baugrupp</span><Icon n="down" s={6} /></Combo>
        <Cell $w={27}><Icon n="asmPick" s={13} /></Cell>
        <Cell $w={13}><Icon n="faded" /></Cell>
        <Cell $w={21}><Icon n="snapBox" s={13} /></Cell>
        <Cell $w={8}><Icon n="down" s={5} /></Cell>
        <Cell $w={20}><Icon n="gPlus" /></Cell>
        <Cell $w={20}><Icon n="gHook" /></Cell>
        <Cell $w={18}><Icon n="dashed" s={13} /></Cell>
        <Cell $w={11}><Icon n="down" s={5} /></Cell>
        <Pressed><Icon n="wireCube" s={15} /></Pressed>
        <Cell $w={18}><Icon n="blueCube" s={13} /></Cell>
        <Cell $w={4} />
        <Combo $w={100} $off><span>Einzelne Kurve</span><Icon n="down" s={6} c="#888" /></Combo>
        <Cell $w={3} />
        {snaps.map(([n, w]) => <Cell key={n} $w={w}><Icon n={n} s={12} /></Cell>)}
        <Cell $w={2} />
        <Stack $w={20}><Icon n="g14" s={11} /><Icon n="g7" s={11} /></Stack>
        <Stack $w={17}><Icon n="g15" s={13} /><Icon n="g16" s={12} /></Stack>
        <Cell $w={5} />
        <Rule $h={28} />
        <Cell $w={7} />
        <Cell $w={19}><Icon n="fitWin" s={13} /></Cell>
        <Cell $w={19}><Icon n="picture" s={13} /></Cell>
        <Cell $w={19}><Icon n="refresh" s={12} /></Cell>
        <Stack $w={21}><Icon n="layout" s={12} /><Icon n="hide" s={12} /></Stack>
        <StackCarets $w={8}><Icon n="down" s={5} /><Icon n="down" s={5} /></StackCarets>
        <Stack $w={20}><Icon n="purpleCube" s={12} /><Icon n="section" s={12} /></Stack>
        <StackCarets $w={10}><Icon n="down" s={5} /><Icon n="down" s={5} /></StackCarets>
        <Cell $w={3} />
        <Rule $h={28} />
        <Spring />
        <EndCaret><Icon n="down" s={5} /></EndCaret>
      </SelectionBar>

      <Work>
        <Rail>
          {rail.map((r, i) => (
            <RailItem key={i} $h={r.h} $active={r.active}>{r.n && <Icon n={r.n} s={r.s} c={r.c} />}</RailItem>
          ))}
        </Rail>

        <Navigator>
          <NavTitle>Teile-Navigator<Icon n="maximize" s={10} /></NavTitle>
          <Table>
            <TreeHead><span>Name<Icon n="up" s={7} /></span><span>Aktual</span></TreeHead>
            {Array.from({ length: 18 }, (_, i) => {
              const r = tree[i];
              return (
                <TreeRow key={i} $alt={i % 2 === 1} $tone={r?.tone}>
                  <span>
                    {r && <Twig $w={r.indent - 2}>{r.twig ?? ""}</Twig>}
                    {r?.icons.map((n) => <Icon key={n} n={n} s={n === "checkbox" ? 10 : n === "check" ? 11 : 12} />)}
                    {r?.t}
                  </span>
                  <Cell $w={18}>{r?.ok && <Icon n="check" s={11} />}</Cell>
                </TreeRow>
              );
            })}
          </Table>
          <HScroll>
            <Icon n="left" s={5} /><Thumb>III</Thumb><Spring /><Icon n="right" s={5} />
          </HScroll>
          <Splitter />
          {["Abhängigkeiten", "Details", "Vorschau"].map((t) => (
            <Fold key={t}>{t}<Icon n="chevDown" s={8} /></Fold>
          ))}
        </Navigator>

        <Dialog>
          <DialogHead>
            <Icon n="gear" s={12} c="#eef3f2" />
            <span>Extrudierter Körper</span>
            <Icon n="reset" s={10} />
            <Icon n="close" s={9} c="#fff" />
          </DialogHead>
          <DialogBody>
            <Sections>
              <Section $h={56}>
                <SectionHead $h={21}>Schnitt<Icon n="chevUp" s={8} /></SectionHead>
                <Field $h={31} $gap={2}>
                  <Pick><Icon n="check" s={10} />Kurve auswählen (1)</Pick>
                  <ToolBtn $w={18} $h={18}><Icon n="bevel" s={13} /></ToolBtn>
                  <ToolBtn $w={25} $h={25} $on><Icon n="curveRule" s={20} /></ToolBtn>
                </Field>
              </Section>
              <Section $h={55}>
                <SectionHead>Richtung<Icon n="chevUp" s={8} /></SectionHead>
                <Field $h={32} $gap={2}>
                  <Cell $w={13}><Icon n="check" s={10} /></Cell>
                  <label>Vektor angeben</label>
                  <ToolBtn $w={18} $h={19}><Icon n="reverse" s={13} /></ToolBtn>
                  <ToolBtn $w={18} $h={19}><Icon n="vecDlg" s={14} /></ToolBtn>
                  <ToolBtn $w={38} $h={25}><Icon n="vector" s={20} /><Icon n="down" s={5} /></ToolBtn>
                </Field>
              </Section>
              <Section $h={87}>
                <SectionHead>Begrenzungen<Icon n="chevUp" s={8} /></SectionHead>
                <Field $h={25}>
                  <label>Ende</label>
                  <Combo $w={110} $h={20}><Icon n="symCube" s={12} /><span>Symmetrischer We</span><Icon n="down" s={6} /></Combo>
                </Field>
                <Field $h={19}>
                  <label>Abstand</label>
                  <Combo $w={110} $h={18}><Cell $w={60} $left>&nbsp;-37</Cell><span>mm</span><Icon n="down" s={6} /></Combo>
                </Field>
                <Field $h={17}><CheckSquare />Intelligentes Profil-Volume öffnen</Field>
              </Section>
              <Section $h={50}>
                <SectionHead>Boolesch<Icon n="chevUp" s={8} /></SectionHead>
                <Field $h={26}>
                  <label>Boolesche Operation (Su</label>
                  <Combo $w={110} $h={20}><Icon n="boolean" s={13} /><span>Ermittelt</span><Icon n="down" s={6} /></Combo>
                </Field>
              </Section>
              <Section $h={18}>
                <SectionHead>Formschräge<Icon n="chevDown" s={8} /></SectionHead>
              </Section>
              <Section $h={48}>
                <SectionHead>Offset<Icon n="chevUp" s={8} /></SectionHead>
                <Field $h={26}>
                  <label>Offset</label>
                  <Combo $w={110} $h={18}><span>Kein</span><Icon n="down" s={6} /></Combo>
                </Field>
              </Section>
              <Section $h={15}>
                <SectionHead>Einstellungen<Icon n="chevUp" s={8} /></SectionHead>
              </Section>
            </Sections>
            <VScroll>
              <ScrollEnd><Icon n="up" s={4} /></ScrollEnd>
              <VThumb><i /><i /><i /><i /></VThumb>
              <ScrollEnd><Icon n="down" s={4} /></ScrollEnd>
            </VScroll>
          </DialogBody>
          <Buttons>
            <Button $primary>&lt; OK &gt;</Button>
            <Button>Anwenden</Button>
            <Button>Abbrechen</Button>
          </Buttons>
        </Dialog>

        <Viewport>
          <Model />
          <FloatBar>
            <Grip />
            <FloatPick $w={35} $h={20}><Icon n="symCube" s={12} /><Icon n="down" s={6} /></FloatPick>
            <span>Ende</span>
            <FloatPick $w={44} $h={17}>-37<Icon n="down" s={6} /></FloatPick>
          </FloatBar>
        </Viewport>
      </Work>

      <Status>
        Schnittgeometrie auswählen
        <div><Icon n="paste" s={11} /><Icon n="fullscreen" s={12} /></div>
        <Watermark>ruload.org</Watermark>
      </Status>
    </Window>
  );
}
